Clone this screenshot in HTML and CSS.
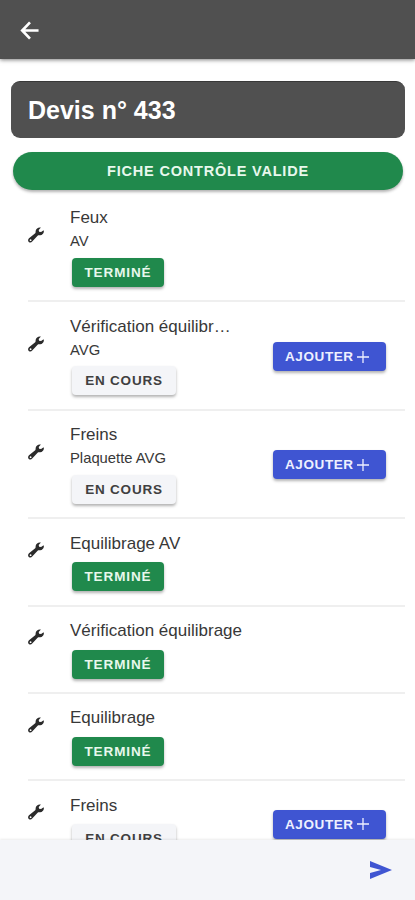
FILE: index.html
```html
<!DOCTYPE html>
<html lang="fr">
<head>
  <meta charset="UTF-8">
  <meta name="viewport" content="width=device-width, initial-scale=1.0">
  <title>Devis n° 433</title>
  <link rel="stylesheet" href="styles.css">
</head>
<body>
  <svg class="sprite" xmlns="http://www.w3.org/2000/svg">
    <symbol id="wrench" viewBox="0 0 16 16">
      <path fill="#2b2b2b" fill-rule="evenodd" d="M11.8.5c-2 .1-3.8 1.400-4.100 3.300-.2 1 .1 1.700-.5 2.500L1 11.300c-1.200 1-1.200 2.600-.2 3.600 1 .9 2.500.8 3.400-.4l5.400-5.700c.7-.8 1.600-.5 2.600-.5 2 0 3.500-1.700 3.700-3.700l-.3-1.300-2.500 1.800-2-.3-.4-1.700L12.900.6zM2.600 12.300a.9.9 0 1 1 0 1.800.9.9 0 0 1 0-1.800z"/>
    </symbol>
  </svg>

  <header class="toolbar">
    <svg class="back-icon" viewBox="0 0 20 20">
      <path d="M10 1.500L1.800 10l8.200 8.500M2 10h17" fill="none" stroke="#fff" stroke-width="2.800"/>
    </svg>
  </header>

  <main class="content">
    <h1 class="devis-title">Devis n° 433</h1>
    <button class="btn-valid">FICHE CONTRÔLE VALIDE</button>

    <ul class="task-list">
      <li class="task tall">
        <svg class="task-icon"><use href="#wrench"/></svg>
        <div class="task-label">
          <h2>Feux</h2>
          <p>AV</p>
          <button class="badge done">TERMINÉ</button>
        </div>
      </li>
      <li class="task tall">
        <svg class="task-icon"><use href="#wrench"/></svg>
        <div class="task-label short">
          <h2>Vérification équilibr…</h2>
          <p>AVG</p>
          <button class="badge pending">EN COURS</button>
        </div>
        <button class="btn-add">AJOUTER<svg viewBox="0 0 12 12"><path d="M6 0v12M0 6h12"/></svg></button>
      </li>
      <li class="task tall">
        <svg class="task-icon"><use href="#wrench"/></svg>
        <div class="task-label short">
          <h2>Freins</h2>
          <p>Plaquette AVG</p>
          <button class="badge pending">EN COURS</button>
        </div>
        <button class="btn-add">AJOUTER<svg viewBox="0 0 12 12"><path d="M6 0v12M0 6h12"/></svg></button>
      </li>
      <li class="task">
        <svg class="task-icon"><use href="#wrench"/></svg>
        <div class="task-label">
          <h2>Equilibrage AV</h2>
          <button class="badge done">TERMINÉ</button>
        </div>
      </li>
      <li class="task">
        <svg class="task-icon"><use href="#wrench"/></svg>
        <div class="task-label">
          <h2>Vérification équilibrage</h2>
          <button class="badge done">TERMINÉ</button>
        </div>
      </li>
      <li class="task">
        <svg class="task-icon"><use href="#wrench"/></svg>
        <div class="task-label">
          <h2>Equilibrage</h2>
          <button class="badge done">TERMINÉ</button>
        </div>
      </li>
      <li class="task">
        <svg class="task-icon"><use href="#wrench"/></svg>
        <div class="task-label short">
          <h2>Freins</h2>
          <button class="badge pending">EN COURS</button>
        </div>
        <button class="btn-add">AJOUTER<svg viewBox="0 0 12 12"><path d="M6 0v12M0 6h12"/></svg></button>
      </li>
    </ul>
  </main>

  <footer class="footer">
    <svg class="send-icon" viewBox="0 0 22 18">
      <path fill="#3f55d2" d="M0 0l22 9L0 18v-6l11-3L0 6z"/>
    </svg>
  </footer>
</body>
</html>
```
FILE: styles.css
```css
* {
  box-sizing: border-box;
}

body {
  display: flex;
  flex-direction: column;
  height: 900px;
  margin: 0;
  overflow: hidden;
  font-family: "Liberation Sans", Arial, sans-serif;
  background: #fff;
  color: #383838;
}

h1, h2, p, ul {
  margin: 0;
  padding: 0;
}

button {
  border: none;
  font-family: inherit;
  font-weight: bold;
  white-space: nowrap;
}

.sprite {
  display: none;
}

.toolbar {
  display: flex;
  align-items: center;
  flex: none;
  height: 59px;
  padding: 1px 0 0 20px;
  background: #505050;
  box-shadow: 0 1px 4px rgba(0, 0, 0, 0.5);
}

.back-icon {
  width: 20px;
  height: 19px;
}

.content {
  flex: 1;
  min-height: 0;
  overflow: hidden;
  margin-top: 5px;
  padding: 17px 10px 0 11px;
}

.devis-title {
  height: 57px;
  padding-left: 17px;
  border-radius: 9px;
  border-top: 1px solid #383838;
  background: #505050;
  color: #fff;
  font-size: 25px;
  line-height: 57px;
}

.btn-valid {
  display: block;
  width: 390px;
  height: 38px;
  margin: 14px 0 4px 2px;
  padding: 0;
  border-radius: 19px;
  background: #20894c;
  color: #e8f8ed;
  font-size: 14.5px;
  letter-spacing: 0.8px;
  box-shadow: 0 2px 3px rgba(0, 0, 0, 0.3);
}

.task-list {
  margin-left: 17px;
  list-style: none;
}

.task {
  display: flex;
  align-items: center;
  height: 87.4px;
  border-bottom: 2px solid #efefef;
}

.task.tall {
  height: 108.4px;
}

.task-icon {
  flex: none;
  width: 16px;
  height: 16px;
  margin: 0 26px 24px 0;
}

.task-label {
  flex: 1;
  min-width: 0;
  align-self: flex-start;
  padding-top: 13.4px;
}

.task-label.short {
  flex: none;
  width: 163px;
}

.task-label h2 {
  height: 23px;
  font-size: 17px;
  font-weight: normal;
  line-height: 22px;
  white-space: nowrap;
}

.task-label p {
  height: 21px;
  font-size: 14.8px;
  line-height: 23px;
}

.badge {
  display: block;
  height: 29px;
  margin: 6.6px 0 0 2px;
  padding: 0;
  border-radius: 4px;
  font-size: 13.5px;
  box-shadow: 0 2px 3px rgba(0, 0, 0, 0.3);
}

.done {
  width: 92px;
  background: #20894c;
  color: #e8f8ed;
  letter-spacing: 0.9px;
}

.pending {
  width: 104px;
  background: #f4f5f8;
  color: #404040;
  letter-spacing: 0.8px;
}

.btn-add {
  display: flex;
  align-items: center;
  width: 113px;
  height: 29px;
  margin: 2px 0 0 40px;
  padding: 0 0 0 12px;
  border-radius: 4px;
  background: #3f55d2;
  color: #eef0ff;
  font-size: 13.5px;
  letter-spacing: 0.6px;
  box-shadow: 0 2px 3px rgba(0, 0, 0, 0.3);
}

.task:last-child .btn-add {
  margin-top: 0;
}

.btn-add svg {
  width: 12px;
  height: 12px;
  margin-left: 3.5px;
  fill: none;
  stroke: #eef0ff;
  stroke-width: 1.3;
}

.footer {
  display: flex;
  justify-content: flex-end;
  flex: none;
  height: 60px;
  padding: 21px 23px 0 0;
  background: #f4f5f9;
  box-shadow: 0 -1px 2px rgba(0, 0, 0, 0.08);
}

.send-icon {
  width: 22px;
  height: 18px;
}
```
